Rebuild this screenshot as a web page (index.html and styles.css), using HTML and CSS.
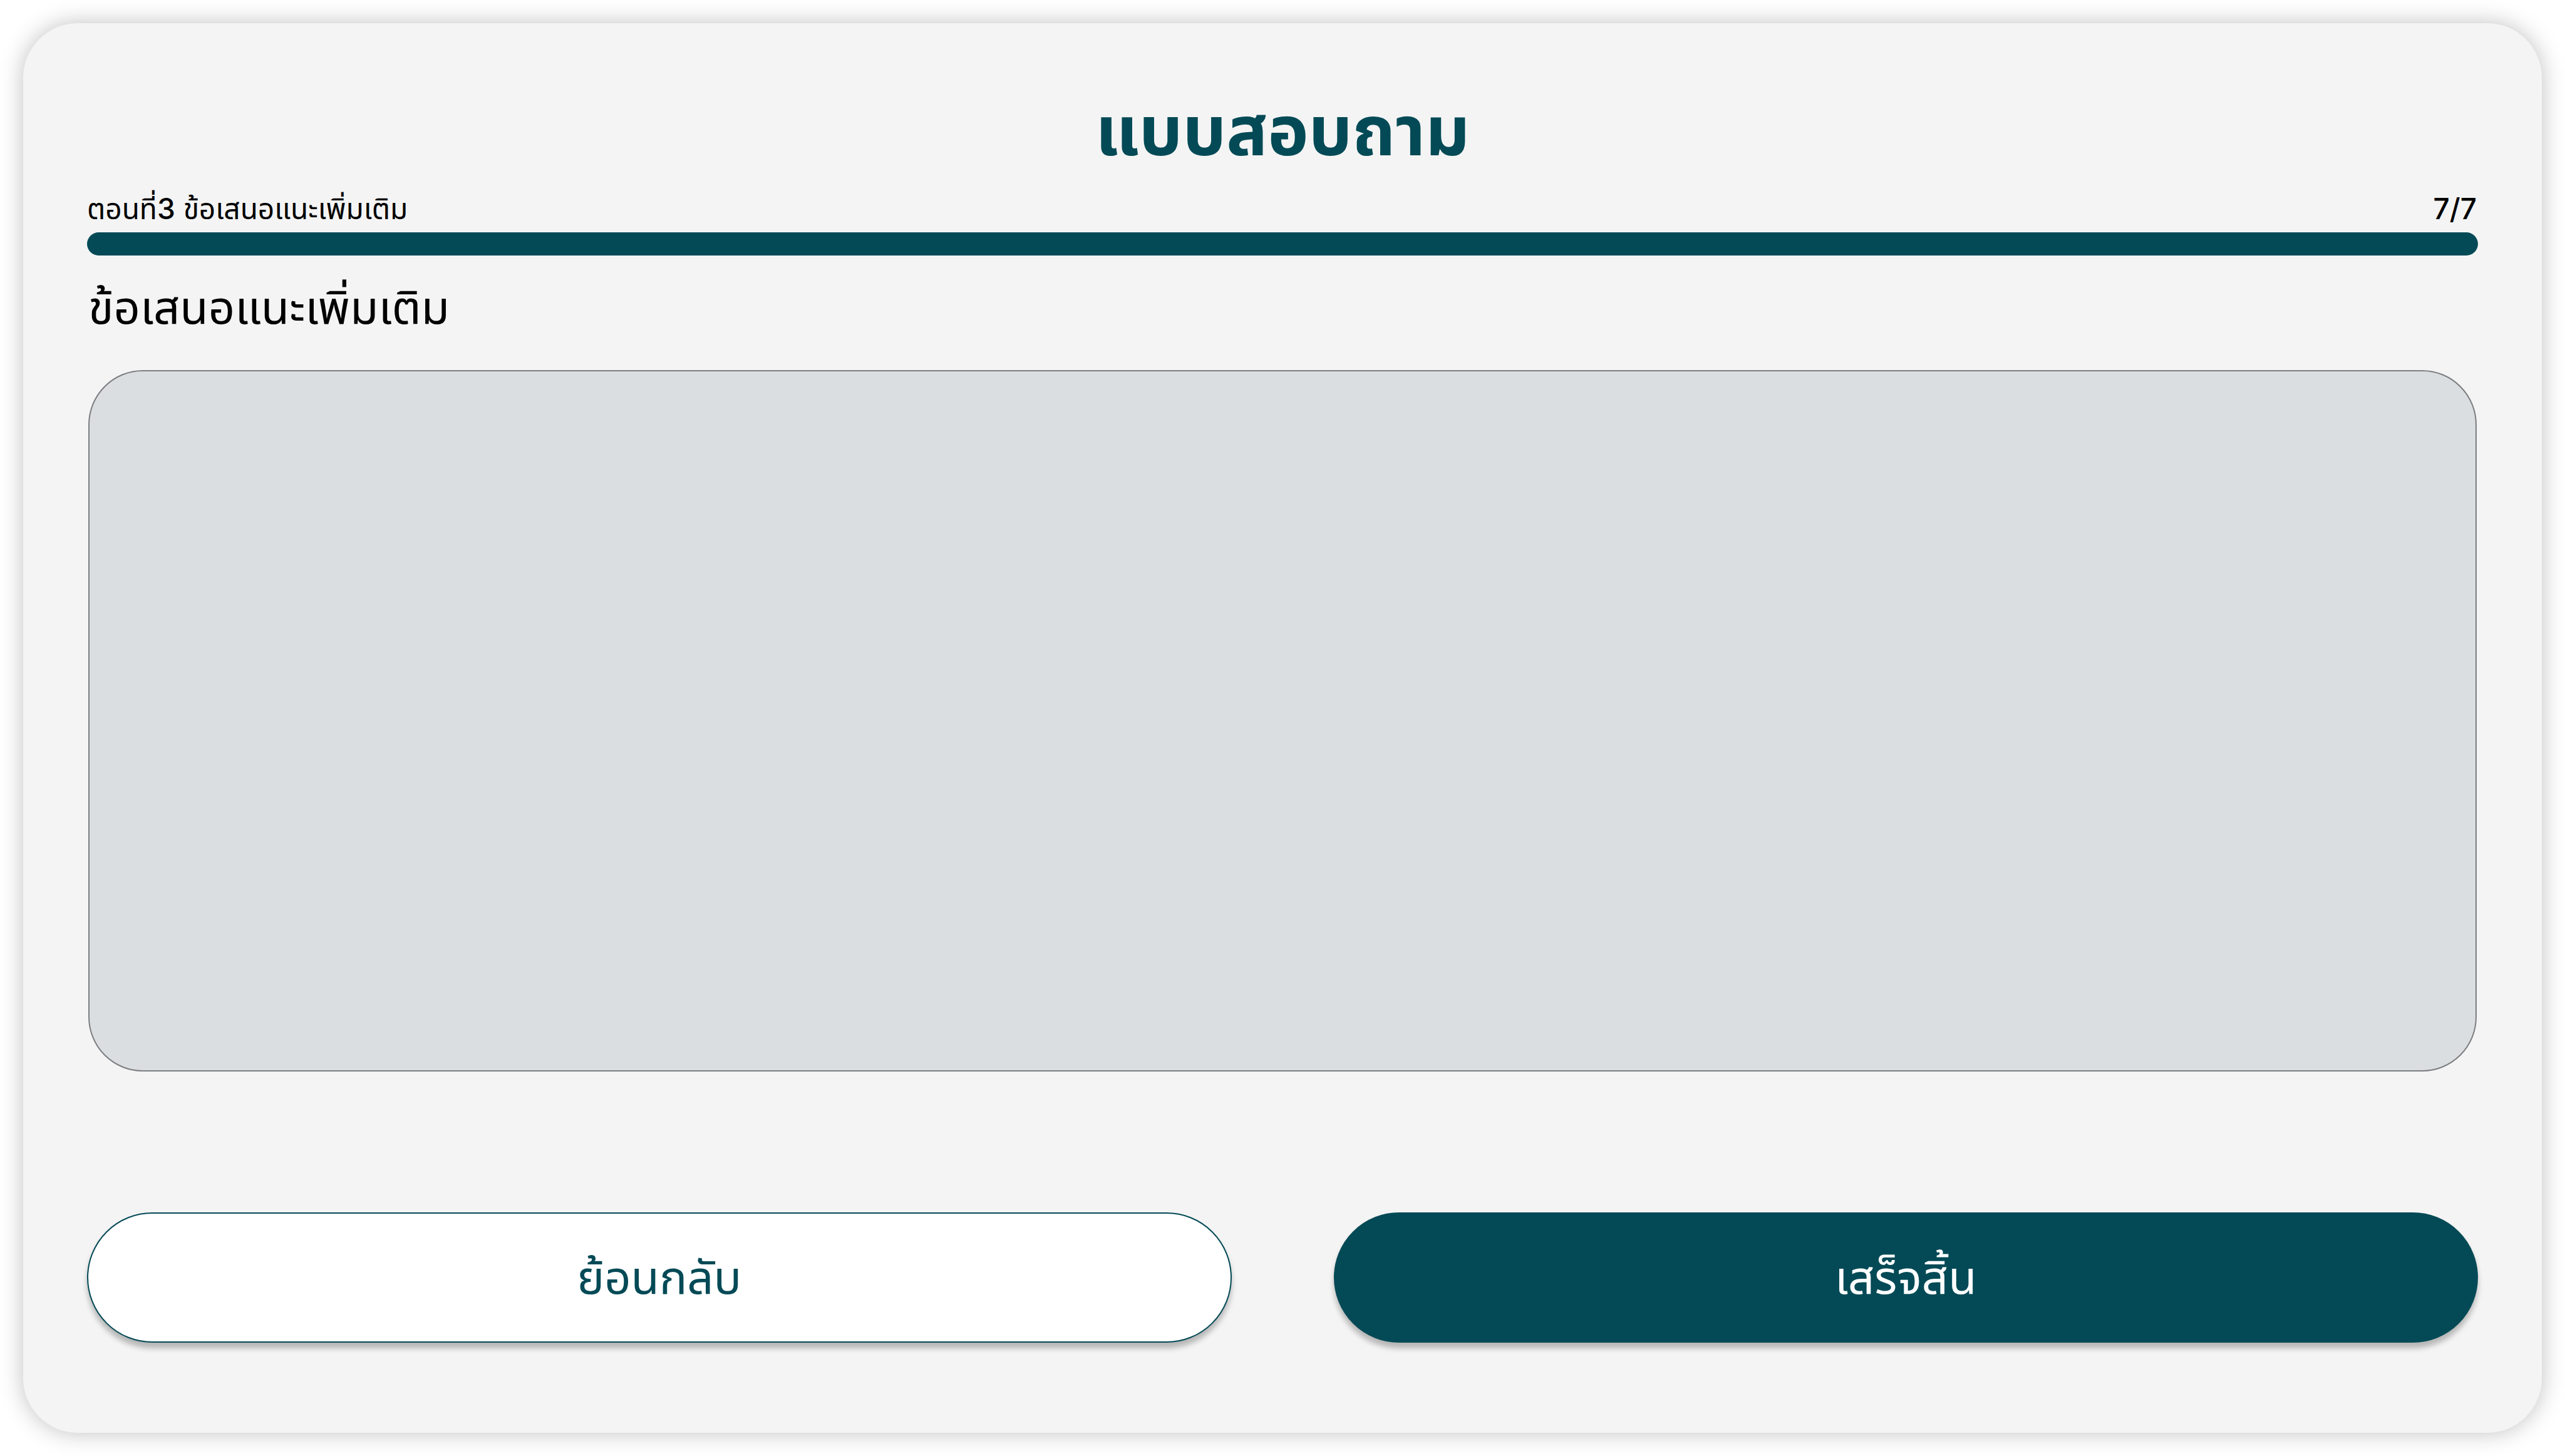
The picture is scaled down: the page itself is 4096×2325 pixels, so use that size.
FILE: index.html
```html
<!DOCTYPE html>
<html lang="th">
<head>
<meta charset="utf-8">
<meta name="viewport" content="width=device-width, initial-scale=1">
<title>แบบสอบถาม</title>
<link rel="stylesheet" href="styles.css">
</head>
<body>
<main class="card">
  <h1 class="title">แบบสอบถาม</h1>
  <div class="step">
    <label for="progress">ตอนที่<span class="number">3</span> ข้อเสนอแนะเพิ่มเติม</label>
    <span class="number">7/7</span>
  </div>
  <progress class="progress" id="progress" value="7" max="7"></progress>
  <form class="form">
    <label class="question" for="comment">ข้อเสนอแนะเพิ่มเติม</label>
    <textarea class="comment" id="comment"></textarea>
    <div class="actions">
      <button class="button button-back" type="button">ย้อนกลับ</button>
      <button class="button button-done" type="submit">เสร็จสิ้น</button>
    </div>
  </form>
</main>
</body>
</html>
```
FILE: styles.css
```css
:root {
  --teal: #044a56;
  --surface: #f4f4f4;
  --field: #dadee1;
}

* {
  box-sizing: border-box;
}

body {
  margin: 0;
  padding: 37px;
  min-height: 100vh;
  display: flex;
  background: #fff;
  color: #000;
  font-family: Inter, "Noto Sans Thai", "Noto Sans", sans-serif;
}

.card {
  flex: 1;
  display: flex;
  flex-direction: column;
  padding: 99px 102px 144px;
  border-radius: 87px;
  background: var(--surface);
  box-shadow: 0 0 37px rgba(0, 0, 0, 0.25);
}

.title {
  margin: 0;
  color: var(--teal);
  font-size: 110px;
  font-weight: 700;
  line-height: 144px;
  text-align: center;
}

.step {
  display: flex;
  justify-content: space-between;
  margin-top: 21px;
  padding-right: 2px;
  font-size: 46px;
  line-height: 64px;
}

.number {
  font-weight: 500;
}

.progress {
  display: block;
  width: 100%;
  height: 37px;
  margin-top: 6px;
  appearance: none;
  border: 0;
  border-radius: 19px;
  overflow: hidden;
  background: var(--field);
}

.progress::-webkit-progress-bar {
  background: var(--field);
}

.progress::-webkit-progress-value {
  background: var(--teal);
}

.form {
  flex: 1;
  display: flex;
  flex-direction: column;
  padding-top: 34px;
}

.question {
  padding: 0 2px;
  font-size: 74px;
  line-height: 96px;
}

.comment {
  flex: 1;
  min-height: 200px;
  margin: 53px 2px 0;
  padding: 48px 64px;
  border: 2px solid #7c7e81;
  border-radius: 87px;
  background: var(--field);
  font: inherit;
  font-size: 74px;
  resize: none;
  outline: none;
}

.actions {
  display: grid;
  grid-template-columns: 1fr 1fr;
  gap: 163px;
  margin-top: 225px;
}

.button {
  height: 208px;
  padding: 0 48px 2px;
  border: 2px solid var(--teal);
  border-radius: 104px;
  box-shadow: 0 9px 9px rgba(0, 0, 0, 0.25);
  font: inherit;
  font-size: 74px;
  line-height: 96px;
}

.button-back {
  background: #fff;
  color: var(--teal);
}

.button-done {
  background: var(--teal);
  color: #fff;
}
```
